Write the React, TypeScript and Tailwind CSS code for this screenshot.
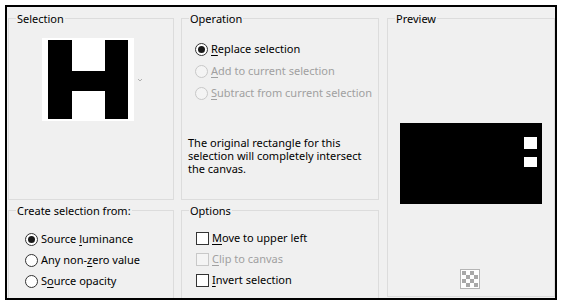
import React from "react";

const font = { fontFamily: '"Noto Sans", "Open Sans", sans-serif' };

function U({ children }: { children: React.ReactNode }) {
  return <span className="underline underline-offset-[2px] decoration-[1px]">{children}</span>;
}

function Radio({ checked, disabled, children }: { checked?: boolean; disabled?: boolean; children: React.ReactNode }) {
  return (
    <div className="flex items-center h-[16px] whitespace-nowrap">
      <div
        className={
          "w-[13px] h-[13px] shrink-0 rounded-full border flex items-center justify-center " +
          (disabled ? "border-[#c8c8c8] bg-[#f4f4f4]" : "border-[#333333] bg-white")
        }
      >
        {checked && <div className="w-[7px] h-[7px] rounded-full bg-[#1a1a1a]" />}
      </div>
      <span className={"ml-[3px] " + (disabled ? "text-[#a0a0a0]" : "text-black")}>{children}</span>
    </div>
  );
}

function Check({ disabled, children }: { disabled?: boolean; children: React.ReactNode }) {
  return (
    <div className="flex items-center h-[16px] whitespace-nowrap">
      <div
        className={
          "w-[13px] h-[13px] shrink-0 border " +
          (disabled ? "border-[#c8c8c8] bg-[#f4f4f4]" : "border-[#333333] bg-white")
        }
      />
      <span className={"ml-[3px] " + (disabled ? "text-[#a0a0a0]" : "text-black")}>{children}</span>
    </div>
  );
}

function Group({
  label,
  className,
  children,
}: {
  label: string;
  className?: string;
  children?: React.ReactNode;
}) {
  return (
    <div className={"relative border border-[#dcdcdc] " + (className ?? "")}>
      <span className="absolute left-[7px] top-[-8px] bg-[#f0f0f0] px-[1px] leading-[16px] text-black whitespace-nowrap">
        {label}
      </span>
      {children}
    </div>
  );
}

export default function App() {
  return (
    <div className="w-[562px] h-[304px] bg-white p-[5px] text-[11px]" style={font}>
      <div className="w-[552px] h-[295px] border-2 border-black bg-[#f0f0f0] flex pl-[1px] pt-[11px]">
        {/* Left column */}
        <div className="w-[166px] flex flex-col">
          <Group label="Selection" className="h-[182px]">
            <div className="flex items-start pl-[33px] pt-[19px]">
              <svg width="92" height="83" viewBox="0 0 92 83">
                <rect x="0" y="0" width="92" height="83" fill="#ffffff" />
                <rect x="6" y="2" width="24" height="79" fill="#000" />
                <rect x="63" y="2" width="23" height="79" fill="#000" />
                <rect x="30" y="33" width="33" height="20" fill="#000" />
              </svg>
              <svg width="6" height="4" viewBox="0 0 6 4" className="ml-[3px] mt-[40px]">
                <path d="M1 1 L3 3 L5 1" stroke="#b0b0b0" strokeWidth="1" fill="none" />
              </svg>
            </div>
          </Group>
          <Group label="Create selection from:" className="mt-[10px] flex-1 border-b-0">
            <div className="flex flex-col gap-[5px] pl-[16px] pt-[20px]">
              <Radio checked>
                Source <U>l</U>uminance
              </Radio>
              <Radio>
                Any non-<U>z</U>ero value
              </Radio>
              <Radio>
                S<U>o</U>urce opacity
              </Radio>
            </div>
          </Group>
        </div>

        {/* Middle column */}
        <div className="w-[198px] ml-[7px] flex flex-col">
          <Group label="Operation" className="h-[182px]">
            <div className="flex flex-col gap-[6px] pl-[13px] pt-[22px]">
              <Radio checked>
                <U>R</U>eplace selection
              </Radio>
              <Radio disabled>
                <U>A</U>dd to current selection
              </Radio>
              <Radio disabled>
                <U>S</U>ubtract from current selection
              </Radio>
            </div>
            <p className="pl-[6px] pt-[35px] leading-[13px] text-black whitespace-nowrap">
              The original rectangle for this
              <br />
              selection will completely intersect
              <br />
              the canvas.
            </p>
          </Group>
          <Group label="Options" className="mt-[10px] flex-1 border-b-0">
            <div className="flex flex-col gap-[5px] pl-[14px] pt-[19px]">
              <Check>
                <U>M</U>ove to upper left
              </Check>
              <Check disabled>
                <U>C</U>lip to canvas
              </Check>
              <Check>
                <U>I</U>nvert selection
              </Check>
            </div>
          </Group>
        </div>

        {/* Right column */}
        <div className="w-[168px] ml-[8px] flex flex-col pb-[1px]">
          <Group label="Preview" className="flex-1 flex flex-col items-start">
            <svg width="142" height="81" viewBox="0 0 142 81" className="ml-[12px] mt-[104px]">
              <rect x="0" y="0" width="142" height="81" fill="#000" />
              <rect x="124" y="14" width="13" height="12" fill="#fff" />
              <rect x="124" y="34" width="13" height="10" fill="#fff" />
            </svg>
            <svg width="20" height="20" viewBox="0 0 20 20" className="ml-[72px] mt-[65px]">
              <rect x="0.5" y="0.5" width="19" height="19" fill="#ffffff" stroke="#b4b4b4" />
              <g fill="#a8a8a8">
                <rect x="2" y="2" width="4" height="4" />
                <rect x="10" y="2" width="4" height="4" />
                <rect x="6" y="6" width="4" height="4" />
                <rect x="14" y="6" width="4" height="4" />
                <rect x="2" y="10" width="4" height="4" />
                <rect x="10" y="10" width="4" height="4" />
                <rect x="6" y="14" width="4" height="4" />
                <rect x="14" y="14" width="4" height="4" />
              </g>
            </svg>
          </Group>
        </div>
      </div>
    </div>
  );
}
